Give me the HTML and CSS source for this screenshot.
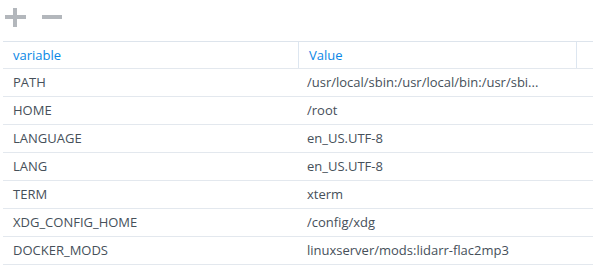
FILE: index.html
```html
<!DOCTYPE html>
<html lang="en">
<head>
    <meta charset="UTF-8">
    <title>Environment</title>
    <link rel="stylesheet" href="styles.css">
</head>
<body>
    <div class="toolbar">
        <button class="tool-btn" title="Add">
            <svg width="22" height="22" viewBox="0 0 22 22"><rect x="8" y="0" width="4" height="19" fill="#b3b7bc"/><rect x="0" y="7" width="21" height="4" fill="#b3b7bc"/></svg>
        </button>
        <button class="tool-btn" title="Remove">
            <svg width="22" height="22" viewBox="0 0 22 22"><rect x="0" y="7" width="20" height="4" fill="#b3b7bc"/></svg>
        </button>
    </div>

    <div class="env-grid">
        <div class="grid-head">
            <div class="cell">variable</div>
            <div class="cell">Value</div>
            <div class="cell scroll-col"></div>
        </div>
        <div class="grid-row"><div class="cell">PATH</div><div class="cell" title="/usr/local/sbin:/usr/local/bin:/usr/sbin:/usr/bin:/sbin:/bin">/usr/local/sbin:/usr/local/bin:/usr/sbi...</div></div>
        <div class="grid-row"><div class="cell">HOME</div><div class="cell">/root</div></div>
        <div class="grid-row"><div class="cell">LANGUAGE</div><div class="cell">en_US.UTF-8</div></div>
        <div class="grid-row"><div class="cell">LANG</div><div class="cell">en_US.UTF-8</div></div>
        <div class="grid-row"><div class="cell">TERM</div><div class="cell">xterm</div></div>
        <div class="grid-row"><div class="cell">XDG_CONFIG_HOME</div><div class="cell">/config/xdg</div></div>
        <div class="grid-row"><div class="cell">DOCKER_MODS</div><div class="cell">linuxserver/mods:lidarr-flac2mp3</div></div>
    </div>
</body>
</html>
```

FILE: styles.css
```css
* {
    margin: 0;
    padding: 0;
    box-sizing: border-box;
}

body {
    font-family: "Open Sans", "Noto Sans", sans-serif;
    font-size: 13px;
    color: #46505a;
    background: white;
    padding: 0 5px 0 3px;
}

.toolbar {
    display: flex;
    gap: 15px;
    height: 41px;
    padding: 8px 0 0 2px;
}

.tool-btn {
    background: none;
    border: none;
    width: 22px;
    height: 22px;
    cursor: pointer;
}

.env-grid {
    border-top: 1px solid #dde4ec;
}

.grid-head,
.grid-row {
    display: grid;
    grid-template-columns: 295px 278px 17px;
    border-bottom: 1px solid #e3e8ee;
}

.grid-head {
    height: 27px;
    color: #0a87e6;
}

.grid-head .cell {
    line-height: 26px;
}

.grid-head .cell + .cell {
    border-left: 1px solid #dde6f0;
}

.grid-row {
    height: 28px;
}

.cell {
    padding: 0 10px;
    line-height: 27px;
    white-space: nowrap;
}

.grid-row .cell + .cell {
    padding-left: 9px;
    padding-right: 10px;
}
```
